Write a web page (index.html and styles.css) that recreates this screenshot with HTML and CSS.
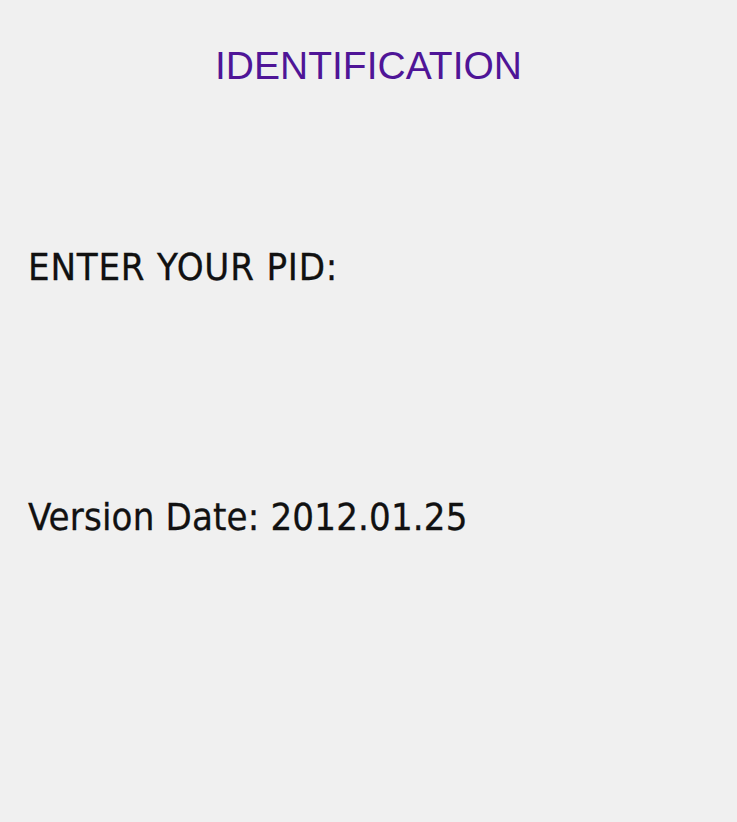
FILE: index.html
```html
<!DOCTYPE html>
<html lang="en">
<head>
  <meta charset="UTF-8">
  <title>Identification</title>
  <link rel="stylesheet" href="styles.css">
</head>
<body>
  <div class="panel">
    <h1 class="title">IDENTIFICATION</h1>
    <div class="label pid-label">ENTER YOUR PID:</div>
    <div class="label version">Version Date: 2012.01.25</div>
  </div>
</body>
</html>
```

FILE: styles.css
```css
html, body {
  margin: 0;
  padding: 0;
  background-color: #f0f0f0;
}
.panel {
  width: 737px;
  height: 822px;
  box-sizing: border-box;
  padding: 40px 28px 0;
}
.title {
  margin: 0;
  text-align: center;
  font-family: "Liberation Sans", Arial, sans-serif;
  font-weight: normal;
  font-size: 39px;
  line-height: 52px;
  color: #4f1597;
}
.label {
  font-family: "DejaVu Sans Condensed", "DejaVu Sans", sans-serif;
  font-size: 38px;
  line-height: 50px;
  color: #111;
  -webkit-text-stroke: 0.3px #111;
}
.pid-label {
  margin-top: 150px;
  letter-spacing: 0.8px;
}
.version {
  margin-top: 200px;
  letter-spacing: 0.15px;
}
```
